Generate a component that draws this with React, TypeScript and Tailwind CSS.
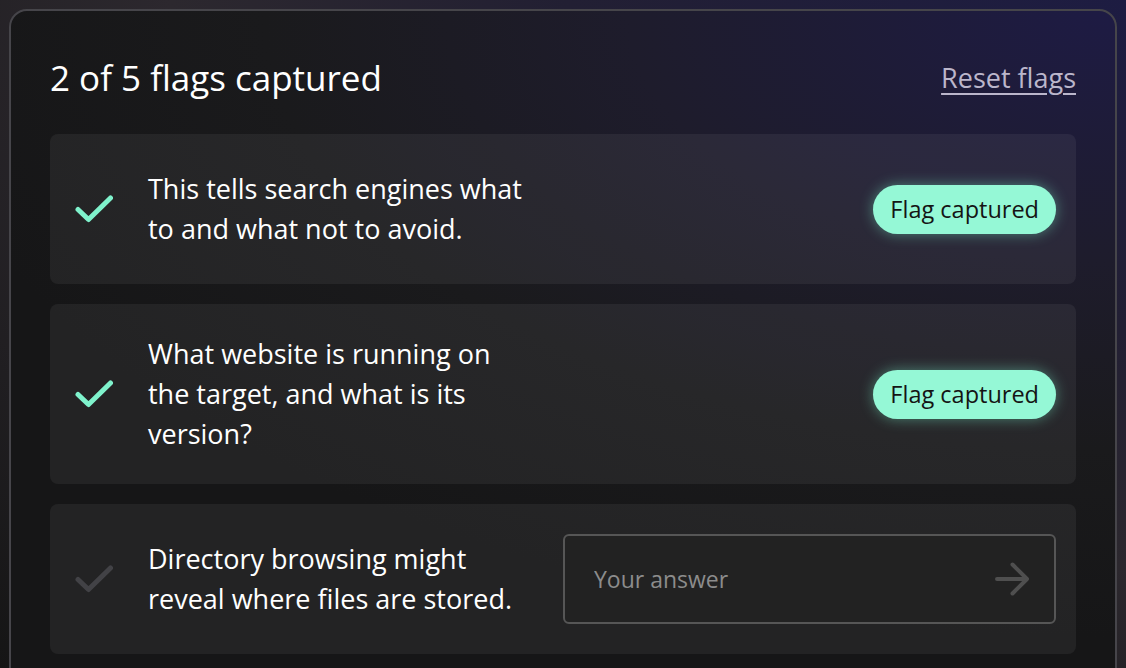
type Flag = {
  lines: string[];
  captured: boolean;
};

const FLAGS: Flag[] = [
  { lines: ["This tells search engines what", "to and what not to avoid."], captured: true },
  {
    lines: ["What website is running on", "the target, and what is its", "version?"],
    captured: true,
  },
  { lines: ["Directory browsing might", "reveal where files are stored."], captured: false },
];

/* ---------- Icons ---------- */
function CheckIcon({ className }: { className?: string }) {
  return (
    <svg
      width="38"
      height="28"
      viewBox="0 0 38 28"
      fill="none"
      stroke="currentColor"
      strokeWidth="5"
      strokeLinecap="round"
      strokeLinejoin="round"
      className={className}
      aria-hidden
    >
      <path d="M3 14.5l10.5 10L35.5 3" />
    </svg>
  );
}

function ArrowIcon() {
  return (
    <svg
      width="34"
      height="34"
      viewBox="0 0 34 34"
      fill="none"
      stroke="currentColor"
      strokeWidth="4"
      strokeLinecap="round"
      strokeLinejoin="round"
      className="text-[#4f4f4f]"
      aria-hidden
    >
      <path d="M2 17h30M17.5 2.5L32 17 17.5 31.5" />
    </svg>
  );
}

/* ---------- FlagRow ---------- */
function FlagRow({ flag }: { flag: Flag }) {
  return (
    <li className="flex items-center rounded-lg bg-white/[0.06] py-[30px] pl-[25px] pr-[20px]">
      <span className="flex w-[73px] shrink-0 items-center">
        <CheckIcon className={flag.captured ? "text-[#7ff2cc]" : "text-[#424246]"} />
      </span>
      <p className="w-[392px] shrink-0 text-[27px] leading-[40px] text-white">
        {flag.lines.map((l) => (
          <span key={l} className="block whitespace-nowrap">
            {l}
          </span>
        ))}
      </p>
      <div className="flex h-[90px] flex-1 items-center justify-end">
        {flag.captured ? (
          <span className="rounded-full bg-[#95f8d6] px-[17px] py-[9px] text-[23.5px] leading-[31px] text-[#141414] shadow-[0_0_14px_rgba(120,240,200,0.45)]">
            Flag captured
          </span>
        ) : (
          <label className="flex h-[90px] w-[493px] items-center rounded-md border-2 border-[#565656] bg-[#222222] pl-[29px] pr-[25px]">
            <input
              placeholder="Your answer"
              className="min-w-0 flex-1 bg-transparent text-[23px] text-white outline-none placeholder:text-[#8c8c8c]"
            />
            <ArrowIcon />
          </label>
        )}
      </div>
    </li>
  );
}

export default function App() {
  const done = FLAGS.filter((f) => f.captured).length;
  return (
    <div
      className="h-[668px] w-[1126px] overflow-hidden bg-[radial-gradient(ellipse_at_top_right,#1d1c42_0%,#221f33_35%,#2c282e_60%,#151515_100%)] pl-[9px] pr-[9px] pt-[9px]"
      style={{ fontFamily: "'Open Sans', Lato, sans-serif" }}
    >
      <section className="h-[700px] rounded-[18px] border-2 border-[#46454a] bg-[radial-gradient(ellipse_110%_90%_at_100%_0%,#1e1b44_0%,#1e1c2c_40%,#1a1a1c_70%,#161617_100%)] px-[39px] pt-[38px]">
        <header className="mb-[27px] flex h-[58px] items-center justify-between">
          <h2 className="text-[35px] text-white">{done} of 5 flags captured</h2>
          <button className="text-[27px] text-[#bbb6cb] underline underline-offset-[5px]">
            Reset flags
          </button>
        </header>
        <ul className="flex flex-col gap-[20px]">
          {FLAGS.map((f) => (
            <FlagRow key={f.lines[0]} flag={f} />
          ))}
        </ul>
      </section>
    </div>
  );
}
